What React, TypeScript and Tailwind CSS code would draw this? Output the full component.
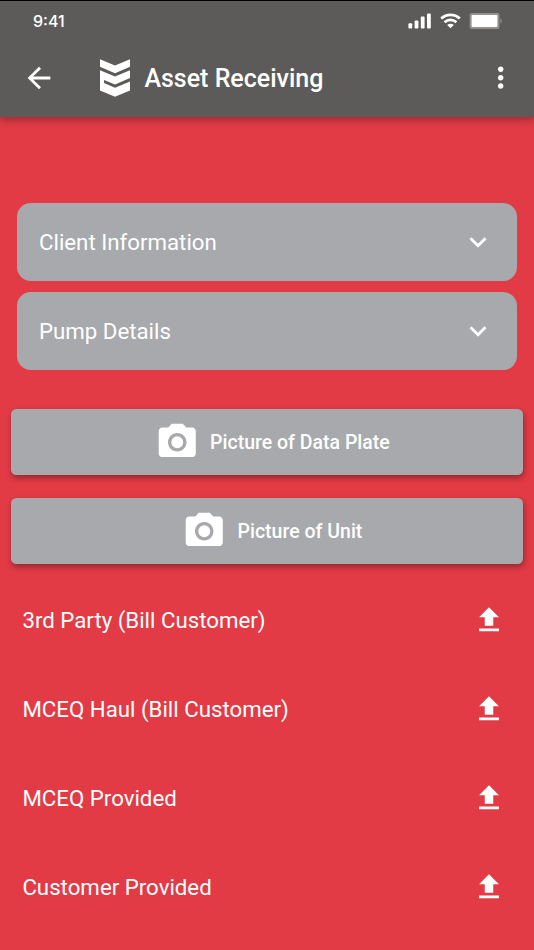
import React from 'react';

const sections = ['Client Information', 'Pump Details'];
const pictures = ['Picture of Data Plate', 'Picture of Unit'];
const uploads = [
  '3rd Party (Bill Customer)',
  'MCEQ Haul (Bill Customer)',
  'MCEQ Provided',
  'Customer Provided'
];

interface IconProps {
  d: string;
  className: string;
}

const Icon: React.FC<IconProps> = ({ d, className }) => (
  <svg viewBox="0 0 24 24" fill="currentColor" className={`shrink-0 ${className}`}>
    <path d={d} />
  </svg>
);

const BACK = 'M20 11H7.83l5.59-5.59L12 4l-8 8 8 8 1.41-1.41L7.83 13H20v-2z';
const MORE =
  'M12 8c1.1 0 2-.9 2-2s-.9-2-2-2-2 .9-2 2 .9 2 2 2zm0 2c-1.1 0-2 .9-2 2s.9 2 2 2 2-.9 2-2-.9-2-2-2zm0 6c-1.1 0-2 .9-2 2s.9 2 2 2 2-.9 2-2-.9-2-2-2z';
const EXPAND = 'M16.59 8.59L12 13.17 7.41 8.59 6 10l6 6 6-6z';
const UPLOAD = 'M9 16h6v-6h4l-7-7-7 7h4zm-4 2h14v2H5z';
const CAMERA =
  'M9 2L7.17 4H4c-1.1 0-2 .9-2 2v12c0 1.1.9 2 2 2h16c1.1 0 2-.9 2-2V6c0-1.1-.9-2-2-2h-3.17L15 2H9zm3 15c-2.76 0-5-2.24-5-5s2.24-5 5-5 5 2.24 5 5-2.24 5-5 5zM12 8.8a3.2 3.2 0 1 0 0 6.4 3.2 3.2 0 0 0 0-6.4z';

const StatusBar = () => (
  <div className="flex h-[39px] items-center justify-between pl-[33px] pr-[31px] pt-[1px]">
    <span className="font-['Inter',sans-serif] text-[16px] font-medium leading-none">9:41</span>
    <div className="flex items-center">
      <svg width="23" height="16" viewBox="0 0 23 16" fill="currentColor">
        <rect x="0.4" y="10.3" width="3.8" height="5.2" rx="1" />
        <rect x="6.6" y="7.6" width="3.8" height="7.9" rx="1" />
        <rect x="12.8" y="3.6" width="3.8" height="11.9" rx="1" />
        <rect x="19" y="0.6" width="3.8" height="14.9" rx="1" />
      </svg>
      <svg width="21" height="16" viewBox="0 0 21 16" fill="none" stroke="currentColor" className="ml-[9px]">
        <path d="M1.2 5.6a13.4 13.4 0 0 1 18.6 0" strokeWidth="2.8" />
        <path d="M4.6 9.3a8.5 8.5 0 0 1 11.8 0" strokeWidth="2.7" />
        <path d="M10.5 15.2L7.2 12.1a4.7 4.7 0 0 1 6.6 0z" fill="currentColor" stroke="none" />
      </svg>
      <svg width="34" height="18" viewBox="0 0 34 18" className="ml-[8px]">
        <rect x="0.6" y="0.9" width="29.8" height="16" rx="2" fill="#92918f" />
        <rect x="2.6" y="2.9" width="25.8" height="12" rx="0.8" fill="white" />
        <path d="M31.4 6.4c1.8.6 1.8 4.6 0 5.2z" fill="#92918f" />
      </svg>
    </div>
  </div>
);

const Logo = () => (
  <svg width="32" height="40" viewBox="0 0 32 40" fill="currentColor" className="ml-[43px] shrink-0">
    <path d="M1 1.2L16 7.4l15-6.2v7.6L16 15.2 1 8.8z" />
    <path d="M1 12.2l15 6.4 15-6.4v7.8l-15 6.4-11-4.5v3.2L16 29.8l15-6.2v8.9l-15 6.3-15-6.3z" />
  </svg>
);

const App: React.FC = () => {
  return (
    <div className="h-[950px] w-[534px] overflow-hidden bg-[#e23b46] font-['Roboto',sans-serif] text-white">
      <header className="h-[117px] border-t border-black bg-[#5c5b59] shadow-[0_3px_8px_rgba(0,0,0,0.3)]">
        <StatusBar />
        <div className="flex h-[76px] items-center pl-[22.4px] pr-[17px]">
          <Icon d={BACK} className="size-[34px]" />
          <Logo />
          <h1 className="ml-[13px] flex-1 text-[25px] font-medium leading-none">Asset Receiving</h1>
          <Icon d={MORE} className="size-[33.4px]" />
        </div>
      </header>

      <main>
        <div className="flex flex-col gap-[11.4px] px-[17px] pt-[86px]">
          {sections.map((title) => (
            <button
              key={title}
              className="flex h-[77.6px] items-center justify-between rounded-[14px] bg-[#a7a9ac] pl-[22px] pr-[22px] text-[22.25px]"
            >
              <span className="pt-px">{title}</span>
              <Icon d={EXPAND} className="size-[34px]" />
            </button>
          ))}
        </div>

        <div className="flex flex-col gap-[22.4px] px-[11.4px] pt-[39px]">
          {pictures.map((title) => (
            <button
              key={title}
              className="flex h-[66.6px] items-center justify-center gap-[11px] rounded-[5.5px] bg-[#a7a9ac] pl-[10.4px] text-[19.5px] font-medium shadow-[1px_3px_6px_rgba(0,0,0,0.35)]"
            >
              <Icon d={CAMERA} className="size-[44.5px]" />
              <span className="pt-[2px]">{title}</span>
            </button>
          ))}
        </div>

        <ul className="pt-[11px]">
          {uploads.map((title) => (
            <li key={title} className="flex h-[89px] items-center justify-between pl-[22.4px] pr-[28px] text-[22.25px]">
              <span className="pt-[2px]">{title}</span>
              <Icon d={UPLOAD} className="size-[34px]" />
            </li>
          ))}
        </ul>
      </main>
    </div>
  );
};

export default App;
